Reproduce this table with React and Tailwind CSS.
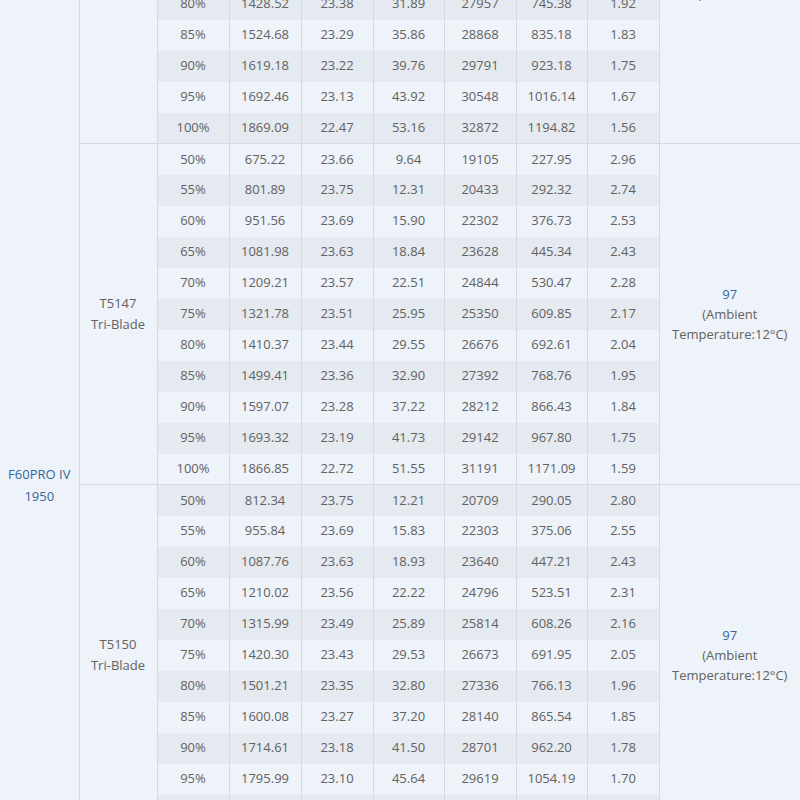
const groups = [
  {
    name: ["T5143", "Tri-Blade"],
    rows: [
      ["50%", "702.15", "23.71", "10.12", "19838", "239.95", "2.93"],
      ["55%", "834.40", "23.69", "12.96", "21147", "307.01", "2.72"],
      ["60%", "986.27", "23.64", "16.70", "23019", "394.78", "2.50"],
      ["65%", "1112.63", "23.58", "19.88", "24375", "468.77", "2.37"],
      ["70%", "1233.90", "23.51", "23.74", "25620", "558.13", "2.21"],
      ["75%", "1341.07", "23.45", "27.52", "26804", "645.34", "2.08"],
      ["80%", "1428.52", "23.38", "31.89", "27957", "745.38", "1.92"],
      ["85%", "1524.68", "23.29", "35.86", "28868", "835.18", "1.83"],
      ["90%", "1619.18", "23.22", "39.76", "29791", "923.18", "1.75"],
      ["95%", "1692.46", "23.13", "43.92", "30548", "1016.14", "1.67"],
      ["100%", "1869.09", "22.47", "53.16", "32872", "1194.82", "1.56"],
    ],
  },
  {
    name: ["T5147", "Tri-Blade"],
    rows: [
      ["50%", "675.22", "23.66", "9.64", "19105", "227.95", "2.96"],
      ["55%", "801.89", "23.75", "12.31", "20433", "292.32", "2.74"],
      ["60%", "951.56", "23.69", "15.90", "22302", "376.73", "2.53"],
      ["65%", "1081.98", "23.63", "18.84", "23628", "445.34", "2.43"],
      ["70%", "1209.21", "23.57", "22.51", "24844", "530.47", "2.28"],
      ["75%", "1321.78", "23.51", "25.95", "25350", "609.85", "2.17"],
      ["80%", "1410.37", "23.44", "29.55", "26676", "692.61", "2.04"],
      ["85%", "1499.41", "23.36", "32.90", "27392", "768.76", "1.95"],
      ["90%", "1597.07", "23.28", "37.22", "28212", "866.43", "1.84"],
      ["95%", "1693.32", "23.19", "41.73", "29142", "967.80", "1.75"],
      ["100%", "1866.85", "22.72", "51.55", "31191", "1171.09", "1.59"],
    ],
  },
  {
    name: ["T5150", "Tri-Blade"],
    rows: [
      ["50%", "812.34", "23.75", "12.21", "20709", "290.05", "2.80"],
      ["55%", "955.84", "23.69", "15.83", "22303", "375.06", "2.55"],
      ["60%", "1087.76", "23.63", "18.93", "23640", "447.21", "2.43"],
      ["65%", "1210.02", "23.56", "22.22", "24796", "523.51", "2.31"],
      ["70%", "1315.99", "23.49", "25.89", "25814", "608.26", "2.16"],
      ["75%", "1420.30", "23.43", "29.53", "26673", "691.95", "2.05"],
      ["80%", "1501.21", "23.35", "32.80", "27336", "766.13", "1.96"],
      ["85%", "1600.08", "23.27", "37.20", "28140", "865.54", "1.85"],
      ["90%", "1714.61", "23.18", "41.50", "28701", "962.20", "1.78"],
      ["95%", "1795.99", "23.10", "45.64", "29619", "1054.19", "1.70"],
      ["100%", "1931.46", "22.45", "53.89", "31466", "1209.84", "1.60"],
    ],
  },
  {
    name: ["T5143", "Tri-Blade"],
    rows: [
      ["50%", "756.18", "23.72", "11.05", "20112", "262.10", "2.88"],
      ["55%", "893.52", "23.68", "14.12", "21630", "334.37", "2.67"],
      ["60%", "1024.37", "23.63", "17.45", "22964", "412.35", "2.48"],
      ["65%", "1149.80", "23.57", "20.61", "24150", "485.78", "2.37"],
      ["70%", "1264.45", "23.50", "24.18", "25297", "568.23", "2.23"],
      ["75%", "1370.92", "23.44", "27.74", "26105", "650.23", "2.11"],
      ["80%", "1462.06", "23.37", "31.26", "26918", "730.55", "2.00"],
      ["85%", "1553.27", "23.29", "35.08", "27744", "817.01", "1.90"],
      ["90%", "1651.40", "23.21", "39.42", "28463", "914.94", "1.80"],
      ["95%", "1748.85", "23.12", "43.66", "29320", "1009.42", "1.73"],
      ["100%", "1902.73", "22.58", "52.71", "31328", "1190.19", "1.60"],
    ],
  },
];

const totalRows = groups.reduce((n, g) => n + g.rows.length, 0);

export default function App() {
  let idx = 0;
  return (
    <div
      className="w-[800px] overflow-hidden bg-[#eef2f9] text-[13px] text-[#626262] h-[800px]"
      style={{ fontFamily: '"Open Sans", "Noto Sans", sans-serif' }}
    >
      <table className="-mt-[198px] w-[800px] table-fixed border-collapse text-center">
        <colgroup>
          <col className="w-[79px]" />
          <col className="w-[78px]" />
          <col className="w-[72px]" />
          <col className="w-[72px]" />
          <col className="w-[72px]" />
          <col className="w-[71px]" />
          <col className="w-[72px]" />
          <col className="w-[71px]" />
          <col className="w-[72px]" />
          <col className="w-[141px]" />
        </colgroup>
        <tbody>
          {groups.map((g, gi) =>
            g.rows.map((r, ri) => {
              const dark = idx % 2 === 0;
              idx++;
              return (
                <tr key={gi + "-" + ri} className="h-[31px]">
                  {gi === 0 && ri === 0 && (
                    <td
                      rowSpan={totalRows}
                      className="border-r border-[#d5dae2] bg-[#eef2f9] align-middle leading-[22px] text-[#31679c]"
                    >
                      F60PRO IV
                      <br />
                      1950
                    </td>
                  )}
                  {ri === 0 && (
                    <td
                      rowSpan={g.rows.length}
                      className="border-r border-t border-[#d5dae2] bg-[#eef2f9] align-middle leading-[21px]"
                    >
                      {g.name[0]}
                      <br />
                      {g.name[1]}
                    </td>
                  )}
                  {r.map((v, ci) => (
                    <td
                      key={ci}
                      className={
                        "border-r border-[#d5dae2] p-0 align-middle " +
                        (ri === 0 ? "border-t " : "") +
                        (dark ? "bg-[#e5e9f0]" : "bg-[#eef2f9]")
                      }
                    >
                      {v}
                    </td>
                  ))}
                  {ri === 0 && (
                    <td
                      rowSpan={g.rows.length}
                      className="border-t border-[#d5dae2] bg-[#eef2f9] px-2 align-middle leading-[20px]"
                    >
                      <span className="text-[#31679c]">97</span>
                      <br />
                      (Ambient Temperature:12°C)
                    </td>
                  )}
                </tr>
              );
            })
          )}
        </tbody>
      </table>
    </div>
  );
}
